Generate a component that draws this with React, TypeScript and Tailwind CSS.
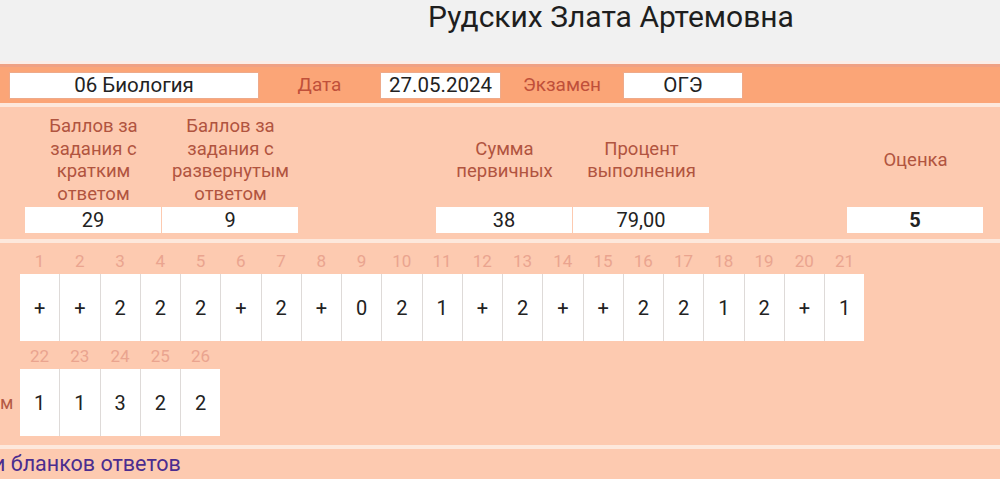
import React from "react";

const row1 = ["+", "+", "2", "2", "2", "+", "2", "+", "0", "2", "1", "+", "2", "+", "+", "2", "2", "1", "2", "+", "1"];
const row2 = ["1", "1", "3", "2", "2"];

function Cells({ values, start }: { values: string[]; start: number }) {
  return (
    <div className="flex flex-col">
      <div className="flex gap-px h-[20px]">
        {values.map((_, i) => (
          <div key={i} className="w-[39.25px] text-center text-[17px] leading-[20px] text-[#eaa48f]">
            {start + i}
          </div>
        ))}
      </div>
      <div className="flex gap-px mt-[3px] bg-[#dedad8] self-start">
        {values.map((v, i) => (
          <div
            key={i}
            className="w-[39.25px] h-[67px] bg-white flex items-center justify-center text-[20px] text-[#222]"
          >
            {v}
          </div>
        ))}
      </div>
    </div>
  );
}

function Col({ label, value, bold }: { label?: React.ReactNode; value?: string; bold?: boolean }) {
  return (
    <div className="w-[137px] flex flex-col">
      <div className="h-[92px] flex items-center justify-center text-center text-[18.5px] leading-[22.5px] text-[#b1543f]">
        {label}
      </div>
      {value !== undefined ? (
        <div
          className={`mt-[1px] w-[136px] h-[26px] bg-white flex items-center justify-center text-[20px] text-[#222] ${
            bold ? "font-bold" : ""
          }`}
        >
          {value}
        </div>
      ) : (
        <div className="mt-[1px] h-[26px]" />
      )}
    </div>
  );
}

export default function App() {
  return (
    <div
      className="w-[1000px] h-[488px] overflow-hidden bg-white flex flex-col"
      style={{ fontFamily: "Roboto, 'Noto Sans', sans-serif" }}
    >
      {/* header */}
      <div className="h-[61px] bg-[#f1f1f1] pl-[428px]">
        <div className="text-[30px] leading-[34px] text-[#1e1e1e]">Рудских Злата Артемовна</div>
      </div>
      <div className="h-[3px] bg-[#fbeee7]" />
      {/* orange bar */}
      <div className="h-[39px] bg-[#fba577] border-t-[3px] border-[#efa183] flex items-center">
        <div className="ml-[9px] w-[250px] h-[27px] bg-white border border-[#eeaa8a] flex items-center justify-center text-[20.5px] text-[#222]">
          06 Биология
        </div>
        <div className="w-[121px] text-center text-[19px] text-[#c0503a]">Дата</div>
        <div className="w-[121px] h-[27px] bg-white border border-[#eeaa8a] flex items-center justify-center text-[20.5px] text-[#222]">
          27.05.2024
        </div>
        <div className="w-[122px] text-center text-[19px] text-[#c0503a]">Экзамен</div>
        <div className="w-[120px] h-[27px] bg-white border border-[#eeaa8a] flex items-center justify-center text-[20.5px] text-[#222]">
          ОГЭ
        </div>
      </div>
      <div className="h-[4px] bg-[#fde8dc]" />
      {/* summary */}
      <div className="h-[132px] bg-[#fdcab0] pt-[7px] pl-[25px] flex">
        <Col
          label={
            <>
              Баллов за
              <br />
              задания с
              <br />
              кратким
              <br />
              ответом
            </>
          }
          value="29"
        />
        <Col
          label={
            <>
              Баллов за
              <br />
              задания с
              <br />
              развернутым
              <br />
              ответом
            </>
          }
          value="9"
        />
        <Col />
        <Col
          label={
            <>
              Сумма
              <br />
              первичных
            </>
          }
          value="38"
        />
        <Col
          label={
            <>
              Процент
              <br />
              выполнения
            </>
          }
          value="79,00"
        />
        <Col />
        <Col label="Оценка" value="5" bold />
      </div>
      <div className="h-[4px] bg-[#fde8dc]" />
      {/* answers */}
      <div className="h-[202px] bg-[#fdcab0] pt-[8px] flex flex-col">
        <div className="flex">
          <div className="w-[20px]" />
          <Cells values={row1} start={1} />
        </div>
        <div className="flex mt-[5px]">
          <div className="w-[20px] pt-[23px] flex items-center">
            <span className="h-[67px] flex items-center text-[18px] text-[#b45a45]">м</span>
          </div>
          <Cells values={row2} start={22} />
        </div>
      </div>
      <div className="h-[4px] bg-[#fde8dc]" />
      <div className="h-[30px] bg-[#fdcab0] flex items-center overflow-hidden">
        <span className="ml-[-7px] text-[21.5px] text-[#4b2d8f] whitespace-nowrap">и бланков ответов</span>
      </div>
      <div className="flex-1 bg-white" />
    </div>
  );
}
